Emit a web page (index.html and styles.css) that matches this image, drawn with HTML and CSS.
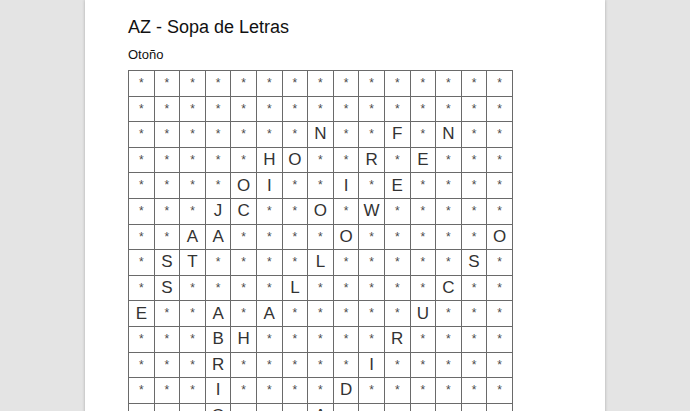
FILE: index.html
```html
<!DOCTYPE html>
<html lang="es">
<head>
<meta charset="utf-8">
<title>AZ - Sopa de Letras</title>
<link rel="stylesheet" href="styles.css">
</head>
<body>
<div class="page">
  <h1 class="title">AZ - Sopa de Letras</h1>
  <p class="subtitle">Otoño</p>
  <div class="grid" id="grid"></div>
</div>
<script src="app.js"></script>
</body>
</html>
```

FILE: styles.css
```css
html, body {
  margin: 0;
  padding: 0;
}
body {
  background: #e4e4e4;
  font-family: "Liberation Sans", Arial, sans-serif;
  color: #111;
  height: 411px;
  overflow: hidden;
}
.page {
  width: 520px;
  margin: 0 auto;
  background: #fff;
  min-height: 600px;
  padding: 17px 0 0 43px;
  box-sizing: border-box;
  box-shadow: 0 0 3px rgba(0,0,0,0.25);
}
.title {
  margin: 0;
  font-size: 18px;
  font-weight: normal;
  line-height: 21px;
}
.subtitle {
  margin: 9px 0 0 0;
  font-size: 13px;
  line-height: 15px;
}
.grid {
  margin-top: 8px;
  display: grid;
  grid-template-columns: repeat(15, 25.6px);
  grid-auto-rows: 25.6px;
  width: 385px;
  border-left: 1px solid #6a6a6a;
  border-top: 1px solid #6a6a6a;
  box-sizing: border-box;
}
.cell {
  border-right: 1px solid #6a6a6a;
  border-bottom: 1px solid #6a6a6a;
  box-sizing: border-box;
  display: flex;
  align-items: center;
  justify-content: center;
  font-size: 17px;
  color: #333;
}
.cell.star {
  font-size: 12px;
  color: #4a4a4a;
  align-items: flex-start;
  padding-top: 5px;
}
```

FILE: app.js
```js
var rows = [
  "***************",
  "***************",
  "*******N**F*N**",
  "*****HO**R*E***",
  "****OI**I*E****",
  "***JC**O*W*****",
  "**AA****O*****O",
  "*ST****L*****S*",
  "*S****L*****C**",
  "E**A*A*****U***",
  "***BH*****R****",
  "***R*****I*****",
  "***I****D******",
  "***O***A*******",
  "***************"
];
var grid = document.getElementById("grid");
rows.forEach(function (r) {
  for (var i = 0; i < r.length; i++) {
    var d = document.createElement("div");
    var ch = r[i];
    d.className = ch === "*" ? "cell star" : "cell";
    d.textContent = ch;
    grid.appendChild(d);
  }
});
```
